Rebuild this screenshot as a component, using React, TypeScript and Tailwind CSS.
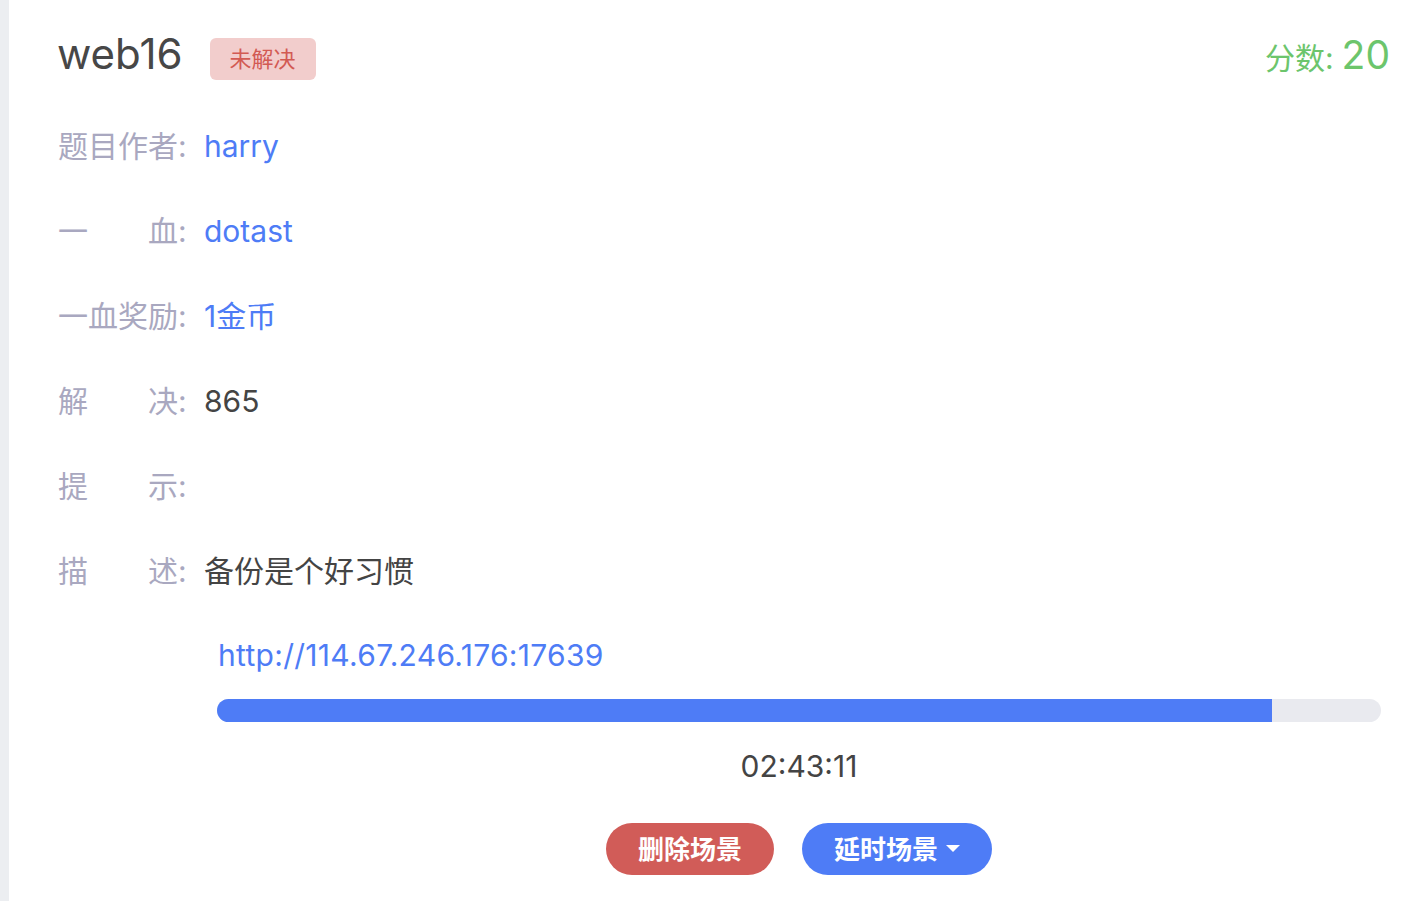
const cjk = "font-['Inter','Noto_Sans_CJK_SC',sans-serif]"

type Row = { label: string; value?: string; tone?: 'link' | 'plain' }

const rows: Row[] = [
  { label: '题目作者', value: 'harry', tone: 'link' },
  { label: '一血', value: 'dotast', tone: 'link' },
  { label: '一血奖励', value: '1金币', tone: 'link' },
  { label: '解决', value: '865', tone: 'plain' },
  { label: '提示' },
  { label: '描述', value: '备份是个好习惯', tone: 'plain' },
]

function Label({ text }: { text: string }) {
  // two-char labels are spread over the same width as four-char ones
  if (text.length === 2) {
    return (
      <span className="flex w-[146px] shrink-0 whitespace-nowrap text-[#a9a8c0]">
        <span className="w-[90px]">{text[0]}</span>
        <span>{text[1]}:</span>
      </span>
    )
  }
  return <span className="w-[146px] shrink-0 whitespace-nowrap text-[#a9a8c0]">{text}:</span>
}

export default function App() {
  const progress = 90.6

  return (
    <div className={`flex min-h-[901px] w-[1408px] bg-white ${cjk}`}>
      <div className="w-[9px] shrink-0 bg-[#eceef1]" />
      <div className="flex-1 pl-[49px] pr-[18px]">
        <div className="flex h-[103px] items-start justify-between pt-[28px]">
          <div className="flex items-center gap-[27px]">
            <h1 className="-ml-[1px] text-[42px] leading-[48px] font-normal text-[#474747]">web16</h1>
            <span className="mt-[10px] flex h-[42px] w-[106px] items-center justify-center rounded-md bg-[#f2cdcc] text-[22px] text-[#d25a53]">
              未解决
            </span>
          </div>
          <div className="mt-[3px] flex items-baseline gap-[8px] text-[#6cc56c]">
            <span className="text-[30px]">分数:</span>
            <span className="text-[39px] leading-[48px]">20</span>
          </div>
        </div>

        {rows.map((r) => (
          <div key={r.label} className="flex h-[85px] items-center text-[30px] leading-[40px]">
            <Label text={r.label} />
            <span className={r.tone === 'link' ? 'text-[#4e7cf6]' : 'text-[#444444]'}>{r.value}</span>
          </div>
        ))}

        <div className="pl-[159px] pr-[9px] pt-[22px]">
          <div className="pl-[1px] text-[30px] leading-[40px] tracking-[0.01em] text-[#4e7cf6]">
            http://114.67.246.176:17639
          </div>
          <div className="mt-[24px] h-[23px] w-full overflow-hidden rounded-full bg-[#e9eaef]">
            <div className="h-full bg-[#4e7cf6]" style={{ width: `${progress}%` }} />
          </div>
          <div className="mt-[24px] text-center text-[30px] leading-[40px] text-[#444444]">02:43:11</div>
          <div className="mt-[37px] flex justify-center gap-[28px]">
            <button className="flex h-[52px] w-[168px] items-center justify-center rounded-full bg-[#d15c58] text-[26px] font-bold text-white">
              删除场景
            </button>
            <button className="flex h-[52px] w-[190px] items-center justify-center gap-[8px] rounded-full bg-[#4e7cf6] text-[26px] font-bold text-white">
              延时场景
              <svg width="14" height="8" viewBox="0 0 14 8">
                <path d="M0 0 L14 0 L7 7 Z" fill="white" />
              </svg>
            </button>
          </div>
        </div>
      </div>
    </div>
  )
}
